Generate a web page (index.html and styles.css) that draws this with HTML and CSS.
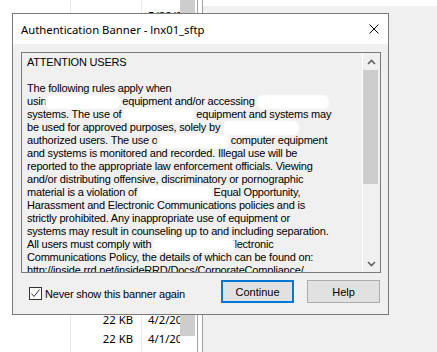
FILE: index.html
```html
<!DOCTYPE html>
<html lang="en">

<head>
    <meta charset="utf-8">
    <title>Authentication Banner</title>
    <link rel="stylesheet" href="styles.css">
</head>

<body>

    <div class="desk">
        <div class="files">
            <div class="row"><span></span><span class="size"></span><span class="date">5/22/2020 9:14 AM</span></div>
            <!-- rows under the dialog stay empty -->
            <div class="row"></div>
            <div class="row"></div>
            <div class="row"></div>
            <div class="row"></div>
            <div class="row"></div>
            <div class="row"></div>
            <div class="row"></div>
            <div class="row"></div>
            <div class="row"></div>
            <div class="row"></div>
            <div class="row"></div>
            <div class="row"></div>
            <div class="row"></div>
            <div class="row"></div>
            <div class="row"></div>
            <div class="row"><span></span><span class="size">22 KB</span><span class="date">4/2/2020 9:12 AM</span></div>
            <div class="row"><span></span><span class="size">22 KB</span><span class="date">4/1/2020 9:12 AM</span></div>
        </div>
        <div class="vscroll">
            <div class="thumb"></div>
        </div>
        <div class="splitter"></div>
        <div class="pane"></div>
    </div>

    <div class="dialog">
        <div class="titlebar">
            <span class="title">Authentication Banner - lnx01_sftp</span>
            <span class="close">
                <svg width="10" height="10" viewBox="0 0 10 10">
                    <path d="M0.5 0.5 L9.5 9.5 M9.5 0.5 L0.5 9.5" stroke="#000" stroke-width="1" fill="none"/>
                </svg>
            </span>
        </div>

        <div class="client">
            <div class="banner">
                <div class="banner-text">
                    <div class="l">ATTENTION USERS</div>
                    <div class="l">&nbsp;</div>
                    <div class="l">The following rules apply when</div>
                    <div class="l">using<span class="redact r-using"></span>equipment and/or accessing <span class="redact r-access"></span></div>
                    <div class="l">systems. The use of <span class="redact r-systems"></span>equipment and systems may</div>
                    <div class="l">be used for approved purposes, solely by <span class="redact r-solely"></span></div>
                    <div class="l">authorized users. The use of<span class="redact r-auth"></span>computer equipment</div>
                    <div class="l">and systems is monitored and recorded. Illegal use will be</div>
                    <div class="l">reported to the appropriate law enforcement officials. Viewing</div>
                    <div class="l">and/or distributing offensive, discriminatory or pornographic</div>
                    <div class="l">material is a violation of <span class="redact r-material"></span>Equal Opportunity,</div>
                    <div class="l">Harassment and Electronic Communications policies and is</div>
                    <div class="l">strictly prohibited. Any inappropriate use of equipment or</div>
                    <div class="l">systems may result in counseling up to and including separation.</div>
                    <div class="l">All users must comply with <span class="redact r-comply"></span>Electronic</div>
                    <div class="l">Communications Policy, the details of which can be found on:</div>
                    <div class="l">http://inside.rrd.net/insideRRD/Docs/CorporateCompliance/</div>
                </div>
                <div class="vbar">
                    <span class="arrow">
                        <svg width="9" height="6" viewBox="0 0 9 6">
                            <polyline points="1,5 4.5,1.5 8,5" stroke="#606060" stroke-width="1.6" fill="none"/>
                        </svg>
                    </span>
                    <div class="vbar-thumb"></div>
                    <span class="arrow down">
                        <svg width="9" height="6" viewBox="0 0 9 6">
                            <polyline points="1,1 4.5,4.5 8,1" stroke="#606060" stroke-width="1.6" fill="none"/>
                        </svg>
                    </span>
                </div>
            </div>

            <div class="footer">
                <label class="check">
                    <span class="cbox">
                        <svg width="11" height="11" viewBox="0 0 11 11">
                            <polyline points="1.5,5.5 4,8.5 9.5,1.5" stroke="#333" stroke-width="1" fill="none"/>
                        </svg>
                    </span>
                    Never show this banner again
                </label>
                <button class="btn primary">Continue</button>
                <button class="btn">Help</button>
            </div>
        </div>
    </div>

</body>

</html>
```

FILE: styles.css
```css
* {
    box-sizing: border-box;
}

body {
    margin: 0;
    width: 437px;
    height: 352px;
    overflow: hidden;
    position: relative;
    background: #f0f0f0;
    font-family: "Liberation Sans", Arial, sans-serif;
    color: #000;
}

/* explorer behind the dialog */

.desk {
    display: flex;
    height: 352px;
}

.files {
    width: 180px;
    padding-top: 6px;
    background:
        linear-gradient(#e9e9e9, #e9e9e9) 70px 0 / 1px 100% no-repeat,
        linear-gradient(#e9e9e9, #e9e9e9) 141px 0 / 1px 100% no-repeat,
        #fff;
    font-family: "Noto Sans", sans-serif;
    font-size: 11.3px;
}

.row {
    display: grid;
    grid-template-columns: 70px 71px 39px;
    height: 19px;
    line-height: 19px;
}

.size {
    text-align: right;
    padding-right: 8px;
}

.date {
    padding-left: 7px;
    white-space: nowrap;
    overflow: hidden;
}

.vscroll {
    width: 17px;
    background: #fff;
}

.thumb {
    width: 15px;
    height: 336px;
    background: #cdcdcd;
}

.splitter {
    width: 6px;
    background: #fff;
    border-left: 1px solid #a0a0a0;
    border-right: 1px solid #a0a0a0;
}

.pane {
    flex: 1;
    background: #f0f0f0;
    border-top: 6px solid #fff;
}

/* dialog */

.dialog {
    position: absolute;
    left: 12px;
    top: 13px;
    width: 377px;
    height: 302px;
    border: 1px solid #7a7a7a;
    background: #f0f0f0;
    display: flex;
    flex-direction: column;
}

.titlebar {
    height: 30px;
    background: #fff;
    display: flex;
    align-items: center;
    padding-left: 8px;
    font-family: "Noto Sans", sans-serif;
    font-size: 11.3px;
}

.close {
    margin-left: auto;
    width: 28px;
    height: 30px;
    display: flex;
    align-items: center;
    justify-content: center;
}

.client {
    flex: 1;
    padding: 8px 7px 0 8px;
    display: flex;
    flex-direction: column;
}

.banner {
    height: 221px;
    border: 1px solid #7a7a7a;
    display: flex;
}

.banner-text {
    flex: 1;
    padding: 3px 0 0 5px;
    overflow: hidden;
    font-size: 11px;
    line-height: 13px;
    letter-spacing: -0.2px;
}

.l {
    white-space: nowrap;
}

.redact {
    position: relative;
    display: inline-block;
    height: 12px;
    vertical-align: -3px;
    background: #fff;
    border-radius: 5px;
    box-shadow: 0 0 2px 1px #fff;
}

.r-using {
    width: 73px;
    margin: 0 3px 0 -6px;
}

.r-access {
    width: 70px;
}

.r-systems {
    width: 70px;
    margin-right: 2px;
}

.r-solely {
    width: 75px;
}

.r-auth {
    width: 70px;
    margin: 0 3px 0 -3px;
}

.r-material {
    width: 71px;
    margin-right: 3px;
}

.r-comply {
    width: 80px;
    margin-right: -7px;
}

.vbar {
    width: 18px;
    border-left: 1px solid #fff;
    display: flex;
    flex-direction: column;
}

.arrow {
    height: 17px;
    display: flex;
    align-items: center;
    justify-content: center;
}

.down {
    margin-top: auto;
}

.vbar-thumb {
    width: 15px;
    height: 114px;
    background: #cdcdcd;
}

.footer {
    display: flex;
    align-items: flex-start;
    margin-top: 7px;
    font-size: 11px;
}

.check {
    display: flex;
    align-items: center;
    gap: 3px;
    margin: 7px 0 0 8px;
    height: 13px;
    letter-spacing: -0.2px;
}

.cbox {
    width: 13px;
    height: 13px;
    border: 1px solid #333;
    background: #fff;
    display: flex;
}

.btn {
    width: 73px;
    height: 23px;
    padding: 0;
    background: #e1e1e1;
    border: 1px solid #adadad;
    font-family: "Liberation Sans", Arial, sans-serif;
    font-size: 11px;
    color: #000;
}

.primary {
    margin-left: auto;
    border: 2px solid #0078d7;
}

.btn + .btn {
    margin-left: 13px;
    margin-right: 1px;
}
```
